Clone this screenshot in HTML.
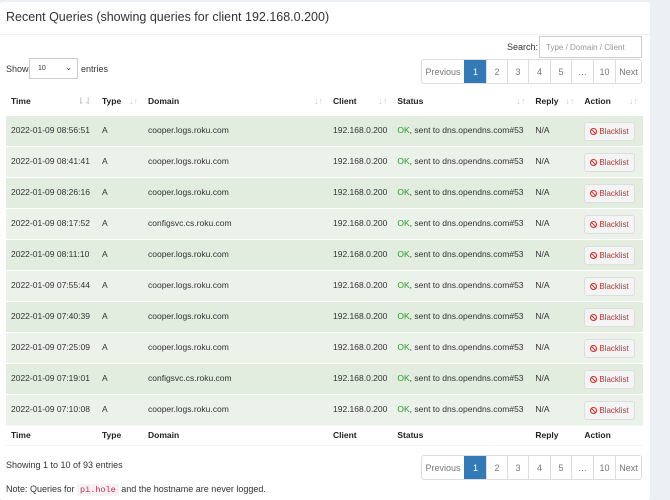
<!DOCTYPE html>
<html><head><style>
*{box-sizing:border-box}
body{margin:0;width:670px;height:500px;background:#ecf0f5;font-family:"Liberation Sans",sans-serif;color:#333;font-size:9px;position:relative;overflow:hidden}
.box{position:absolute;left:0;top:2px;width:650px;height:498px;background:#fff;border-radius:3px}
.hdr{position:absolute;left:0;top:0;width:650px;height:33px;border-bottom:1px solid #f0f0f0;font-size:12.5px;padding:8px 0 0 6px;color:#333}
.abs{position:absolute}
.pg{position:absolute;display:flex;height:25px;border:1px solid #ddd;border-radius:3px;font-size:9px;color:#777}
.pg div{border-left:1px solid #ddd;display:flex;align-items:center;justify-content:center}
.pg div:first-child{border-left:none}
.pg .a{background:#337ab7;color:#fff;border-color:#337ab7}
table{position:absolute;left:6px;top:86px;width:637px;border-collapse:collapse;font-size:8.5px}
th{text-align:left;font-weight:bold;height:27px;padding:0 5px;color:#222;position:relative}
td{height:31px;padding:0 5px;vertical-align:top;padding-top:9px;border-top:1px solid #fff}
tbody tr:nth-child(odd){background:#e2ecdf}
tbody tr:nth-child(even){background:#ebf2e9}
.s{position:absolute;right:5px;top:8px;color:#ccc;font-size:9px}
tfoot th{height:20px;border-top:1px solid #f4f4f4;border-bottom:1px solid #f4f4f4;background:#fff}
.ok{color:#2a9a2a}
.bl{display:inline-block;margin-top:-3px;border:1px solid #ddd;background:#f4f4f4;color:#c9302c;font-size:8px;padding:4px 5px;border-radius:3px}
.bl b{display:inline-block;width:7px;height:7px;border:1.3px solid #c9302c;border-radius:50%;vertical-align:-1px;position:relative;margin-right:2px}
.bl b:after{content:"";position:absolute;left:2px;top:-1px;width:1.3px;height:7px;background:#c9302c;transform:rotate(-45deg)}
</style></head><body>
<div class="box">
<div class="hdr">Recent Queries (showing queries for client 192.168.0.200)</div>
<div class="abs" style="left:507px;top:40px">Search:</div>
<div class="abs" style="left:539px;top:34px;width:103px;height:22px;border:1px solid #ccc;font-size:8px;color:#999;padding:6px 0 0 6px">Type / Domain / Client</div>
<div class="abs" style="left:6px;top:62px">Show</div>
<div class="abs" style="left:29px;top:56px;width:49px;height:21px;border:1px solid #ccc;font-size:7px;padding:6px 0 0 8px">10<span style="position:absolute;right:5px;top:4px;font-size:8px">⌄</span></div>
<div class="abs" style="left:81px;top:62px">entries</div>
<div class="pg" style="left:421px;top:57px">
<div style="width:42px">Previous</div><div class="a" style="width:22px">1</div><div style="width:21px">2</div><div style="width:21px">3</div><div style="width:22px">4</div><div style="width:21px">5</div><div style="width:22px">…</div><div style="width:22px">10</div><div style="width:26px">Next</div></div>
<table>
<thead><tr><th style="width:91px">Time<span class="s">⇂⇃</span></th><th style="width:46px">Type<span class="s">↓↑</span></th><th style="width:185px">Domain<span class="s">↓↑</span></th><th style="width:63px">Client<span class="s">↓↑</span></th><th style="width:138px">Status<span class="s">↓↑</span></th><th style="width:49px">Reply<span class="s">↓↑</span></th><th>Action<span class="s">↓↑</span></th></tr></thead>
<tbody>
<tr><td>2022-01-09 08:56:51</td><td>A</td><td>cooper.logs.roku.com</td><td>192.168.0.200</td><td><span class="ok">OK</span>, sent to dns.opendns.com#53</td><td>N/A</td><td><span class="bl"><b></b>Blacklist</span></td></tr>
<tr><td>2022-01-09 08:41:41</td><td>A</td><td>cooper.logs.roku.com</td><td>192.168.0.200</td><td><span class="ok">OK</span>, sent to dns.opendns.com#53</td><td>N/A</td><td><span class="bl"><b></b>Blacklist</span></td></tr>
<tr><td>2022-01-09 08:26:16</td><td>A</td><td>cooper.logs.roku.com</td><td>192.168.0.200</td><td><span class="ok">OK</span>, sent to dns.opendns.com#53</td><td>N/A</td><td><span class="bl"><b></b>Blacklist</span></td></tr>
<tr><td>2022-01-09 08:17:52</td><td>A</td><td>configsvc.cs.roku.com</td><td>192.168.0.200</td><td><span class="ok">OK</span>, sent to dns.opendns.com#53</td><td>N/A</td><td><span class="bl"><b></b>Blacklist</span></td></tr>
<tr><td>2022-01-09 08:11:10</td><td>A</td><td>cooper.logs.roku.com</td><td>192.168.0.200</td><td><span class="ok">OK</span>, sent to dns.opendns.com#53</td><td>N/A</td><td><span class="bl"><b></b>Blacklist</span></td></tr>
<tr><td>2022-01-09 07:55:44</td><td>A</td><td>cooper.logs.roku.com</td><td>192.168.0.200</td><td><span class="ok">OK</span>, sent to dns.opendns.com#53</td><td>N/A</td><td><span class="bl"><b></b>Blacklist</span></td></tr>
<tr><td>2022-01-09 07:40:39</td><td>A</td><td>cooper.logs.roku.com</td><td>192.168.0.200</td><td><span class="ok">OK</span>, sent to dns.opendns.com#53</td><td>N/A</td><td><span class="bl"><b></b>Blacklist</span></td></tr>
<tr><td>2022-01-09 07:25:09</td><td>A</td><td>cooper.logs.roku.com</td><td>192.168.0.200</td><td><span class="ok">OK</span>, sent to dns.opendns.com#53</td><td>N/A</td><td><span class="bl"><b></b>Blacklist</span></td></tr>
<tr><td>2022-01-09 07:19:01</td><td>A</td><td>configsvc.cs.roku.com</td><td>192.168.0.200</td><td><span class="ok">OK</span>, sent to dns.opendns.com#53</td><td>N/A</td><td><span class="bl"><b></b>Blacklist</span></td></tr>
<tr><td>2022-01-09 07:10:08</td><td>A</td><td>cooper.logs.roku.com</td><td>192.168.0.200</td><td><span class="ok">OK</span>, sent to dns.opendns.com#53</td><td>N/A</td><td><span class="bl"><b></b>Blacklist</span></td></tr>
</tbody>
<tfoot><tr><th>Time</th><th>Type</th><th>Domain</th><th>Client</th><th>Status</th><th>Reply</th><th>Action</th></tr></tfoot>
</table>
<div class="abs" style="left:6px;top:458px">Showing 1 to 10 of 93 entries</div>
<div class="pg" style="left:421px;top:453px">
<div style="width:42px">Previous</div><div class="a" style="width:22px">1</div><div style="width:21px">2</div><div style="width:21px">3</div><div style="width:22px">4</div><div style="width:21px">5</div><div style="width:22px">…</div><div style="width:22px">10</div><div style="width:26px">Next</div></div>
<div class="abs" style="left:6px;top:482px">Note: Queries for <code style="font-family:'Liberation Mono',monospace;color:#c7254e;background:#f9f2f4;padding:1px 3px;font-size:8.5px">pi.hole</code> and the hostname are never logged.</div>
</div>
</body></html>
